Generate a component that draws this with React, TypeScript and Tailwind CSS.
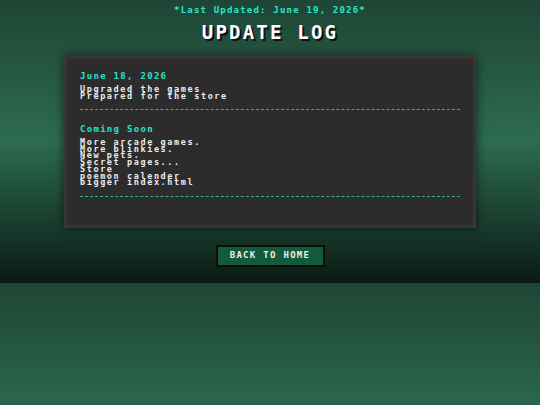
const updates = ["Upgraded the games", "Prepared for the store"];

const comingSoon = [
  "More arcade games.",
  "More blinkies.",
  "New pets.",
  "Secret pages...",
  "Store",
  "poemon calender",
  "bigger index.html",
];

export default function App() {
  return (
    <div className="min-h-[405px] bg-[linear-gradient(180deg,#1e4535_0%,#2d6b51_50%,#0b1a14_100%)] bg-[length:100%_283px] bg-repeat font-['DejaVu_Sans_Mono','Liberation_Mono',monospace]">
      <div className="flex flex-col items-center pt-[4px]">
        <p className="text-[9px] leading-[12px] font-bold tracking-[1.2px] text-[#2ee6c6]">
          *Last Updated: June 19, 2026*
        </p>
        <h1 className="mt-[6px] text-[19px] leading-[20px] font-bold tracking-[2.2px] text-white [text-shadow:2px_2px_0_#111]">
          UPDATE LOG
        </h1>

        <div className="mt-[14px] w-[412px] border-[3px] border-[#3b3434] bg-[#2c2c2c] px-[13px] pt-[11px] pb-[28px] shadow-[0_0_10px_rgba(0,0,0,0.6)]">
          <h2 className="text-[9px] leading-[12px] font-bold tracking-[1.3px] text-[#2ee0c6]">
            June 18, 2026
          </h2>
          <div className="mt-[4px] text-[8.5px] leading-[7px] font-semibold tracking-[1.6px] text-[#ececec]">
            {updates.map((u) => (
              <p key={u}>{u}</p>
            ))}
          </div>
          <div className="mt-[9px] border-t border-dashed border-[#3aa9a2]" />

          <h2 className="mt-[13px] text-[9px] leading-[12px] font-bold tracking-[1.3px] text-[#2ee0c6]">
            Coming Soon
          </h2>
          <div className="mt-[4px] text-[8.5px] leading-[6.7px] font-semibold tracking-[1.6px] text-[#ececec]">
            {comingSoon.map((c) => (
              <p key={c}>{c}</p>
            ))}
          </div>
          <div className="mt-[10px] border-t border-dashed border-[#3aa9a2]" />
        </div>

        <button className="mt-[17px] h-[22px] w-[109px] border-2 border-[#0a0f0c] bg-[#135a3b] text-[9px] font-bold tracking-[1.3px] text-[#e8f0ea]">
          BACK TO HOME
        </button>
      </div>
    </div>
  );
}
